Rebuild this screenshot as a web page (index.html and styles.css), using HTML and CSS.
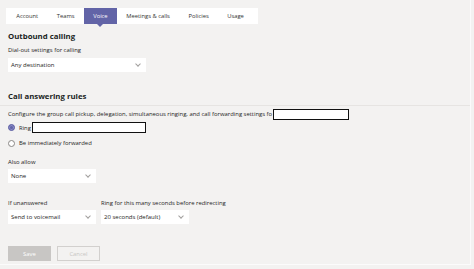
FILE: index.html
```html
<!DOCTYPE html>
<html lang="en">
<head>
  <meta charset="UTF-8">
  <title>Voice</title>
  <link rel="stylesheet" href="styles.css">
</head>
<body>
  <div class="page">
    <div class="tabs">
      <div class="tab">Account</div>
      <div class="tab">Teams</div>
      <div class="tab active">Voice</div>
      <div class="tab">Meetings &amp; calls</div>
      <div class="tab">Policies</div>
      <div class="tab">Usage</div>
    </div>

    <div class="section outbound">
      <h2>Outbound calling</h2>
      <div class="label">Dial-out settings for calling</div>
      <div class="select wide">Any destination<span class="chev"></span></div>
    </div>

    <div class="section answering">
      <h2>Call answering rules</h2>
    </div>
    <div class="divider"></div>

    <div class="section">
      <div class="desc">Configure the group call pickup, delegation, simultaneous ringing, and call forwarding settings fo<span class="redact long"></span></div>
      <div class="radio checked"><span class="dot"></span>Ring<span class="redact name"></span></div>
      <div class="radio"><span class="dot"></span>Be immediately forwarded</div>

      <div class="label also">Also allow</div>
      <div class="select">None<span class="chev"></span></div>

      <div class="row">
        <div class="field">
          <div class="label">If unanswered</div>
          <div class="select">Send to voicemail<span class="chev"></span></div>
        </div>
        <div class="field">
          <div class="label">Ring for this many seconds before redirecting</div>
          <div class="select">20 seconds (default)<span class="chev"></span></div>
        </div>
      </div>

      <div class="buttons">
        <button class="btn save">Save</button>
        <button class="btn cancel">Cancel</button>
      </div>
    </div>
  </div>
</body>
</html>
```

FILE: styles.css
```css
body {
  margin: 0;
  background-color: #f3f2f1;
  font-family: "Open Sans", "Noto Sans", sans-serif;
  color: #252423;
}
.page {
  width: 471px;
  height: 265px;
  border-right: 1px solid #fbfbfb;
  border-bottom: 1px solid #fbfbfb;
  padding-top: 8px;
  box-sizing: border-box;
}
.tabs {
  display: flex;
  margin-left: 6px;
  width: 252px;
  height: 16px;
  background-color: #fff;
  padding-left: 1px;
  box-sizing: border-box;
}
.tab {
  font-size: 5.8px;
  line-height: 16px;
  padding: 0 9.3px;
  color: #323130;
  position: relative;
  white-space: nowrap;
  flex-shrink: 0;
}
.tab.active {
  background-color: #6264a7;
  color: #fff;
}
.tab.active::after {
  content: "";
  position: absolute;
  left: 50%;
  bottom: -3px;
  margin-left: -3px;
  border-left: 3px solid transparent;
  border-right: 3px solid transparent;
  border-top: 3px solid #6264a7;
}
.section {
  padding: 0 8px;
}
h2 {
  font-size: 7.8px;
  font-weight: 700;
  margin: 6px 0 0;
  line-height: 12px;
  color: #201f1e;
}
.label {
  font-size: 5.9px;
  line-height: 9px;
  margin-top: 2px;
}
.outbound .label {
  margin-top: 4px;
}
.select {
  position: relative;
  width: 88px;
  height: 14px;
  margin-top: 2px;
  background-color: #fff;
  font-size: 6px;
  line-height: 14px;
  padding-left: 3px;
  box-sizing: border-box;
}
.select.wide {
  width: 138px;
  margin-top: 3px;
}
.chev {
  position: absolute;
  right: 6px;
  top: 4px;
  width: 3px;
  height: 3px;
  border-right: 1px solid #a19f9d;
  border-bottom: 1px solid #a19f9d;
  transform: rotate(45deg);
}
.answering h2 {
  margin-top: 18px;
}
.divider {
  height: 1px;
  background-color: #e6e4e2;
  margin-top: 3px;
}
.desc {
  font-size: 5.9px;
  line-height: 12px;
  margin-top: 2px;
  display: flex;
  align-items: center;
}
.redact {
  display: inline-block;
  background-color: #fff;
  border: 1.5px solid #111;
  box-sizing: border-box;
}
.redact.long {
  width: 76px;
  height: 11px;
  margin-left: 1px;
}
.redact.name {
  width: 114px;
  height: 11px;
  margin-left: 1px;
}
.radio {
  display: flex;
  align-items: center;
  font-size: 5.9px;
}
.radio.checked {
  height: 15px;
}
.radio:not(.checked) {
  height: 16px;
}
.dot {
  width: 7px;
  height: 7px;
  border: 1px solid #8a8886;
  border-radius: 50%;
  background-color: #fff;
  margin-right: 4px;
  box-sizing: border-box;
}
.radio.checked .dot {
  background-color: #6264a7;
  border-color: #6264a7;
  box-shadow: inset 0 0 0 1px #8b8cc7;
}
.label.also {
  margin-top: 7px;
}
.row {
  display: flex;
  gap: 5px;
  margin-top: 14px;
}
.buttons {
  display: flex;
  gap: 6px;
  margin-top: 22px;
}
.btn {
  width: 43px;
  height: 15px;
  font-family: inherit;
  font-size: 5.9px;
  padding: 0;
}
.btn.save {
  background-color: #c8c6c4;
  color: #fff;
  border: none;
}
.btn.cancel {
  background-color: transparent;
  color: #c8c6c4;
  border: 1px solid #d2d0ce;
}
```
